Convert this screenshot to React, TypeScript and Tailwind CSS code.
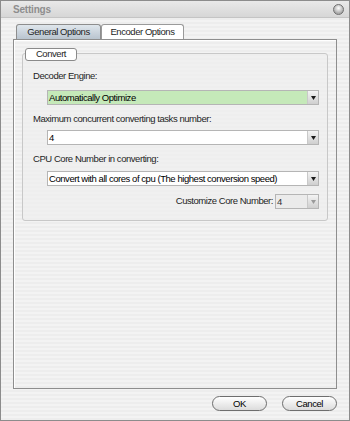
import React from "react";

const stripes =
  "bg-[repeating-linear-gradient(0deg,#ededed_0px,#ededed_2px,#f3f3f3_2px,#f3f3f3_4px)]";

function Arrow({ disabled }: { disabled?: boolean }) {
  return (
    <div className="flex h-full w-[11px] items-center justify-center border-l border-[#c9c9c9] bg-gradient-to-b from-[#f4f4f4] to-[#cfcfcf]">
      <svg width="5" height="4" viewBox="0 0 5 4">
        <path d="M0 0h5L2.5 4z" fill={disabled ? "#9a9a9a" : "#1a1a1a"} />
      </svg>
    </div>
  );
}

function Select({
  value,
  className,
  disabled,
}: {
  value: string;
  className: string;
  disabled?: boolean;
}) {
  return (
    <div
      className={`flex h-[15px] items-stretch border border-[#b5b5b5] ${className}`}
    >
      <div
        className={`flex-1 overflow-hidden whitespace-nowrap pl-[1px] leading-[13px] ${
          disabled ? "text-[#333]" : "text-black"
        }`}
      >
        {value}
      </div>
      <Arrow disabled={disabled} />
    </div>
  );
}

export default function App() {
  return (
    <div
      className={`flex h-[421px] w-[350px] flex-col overflow-hidden border border-[#8c8c8c] ${stripes} font-['Liberation_Sans',Arial,sans-serif] text-[9.5px] tracking-[-0.45px] text-[#1e1e1e]`}
    >
      {/* title bar */}
      <div className="flex h-[17px] items-center justify-between border-b border-[#c4c4c4] bg-gradient-to-b from-[#e9e9e9] to-[#d6d6d6] pl-[12px] pr-[5px]">
        <span className="text-[10px] font-bold tracking-[-0.2px] text-[#8e8e8e]">Settings</span>
        <div className="h-[11px] w-[11px] rounded-full border border-[#6f6f6f] bg-[radial-gradient(circle_at_50%_35%,#ffffff,#a8a8a8_70%)]" />
      </div>

      <div className="flex flex-1 flex-col px-[12px] pt-[6px]">
        {/* tabs */}
        <div className="flex pl-[3px]">
          <div className="flex h-[15px] w-[85px] items-center justify-center rounded-t-[3px] border border-b-0 border-[#8d8d8d] bg-gradient-to-b from-[#dfe6ec] to-[#b9c4cf]">
            General Options
          </div>
          <div className="flex h-[15px] w-[83px] items-center justify-center rounded-t-[3px] border border-b-0 border-[#9a9a9a] bg-white">
            Encoder Options
          </div>
        </div>

        {/* panel */}
        <div className="h-[350px] border border-[#8e8e8e] px-[8px] pt-[7px] shadow-[inset_1px_1px_0_#ffffff]">
          <div className="relative mt-[6px] h-[168px] rounded-[3px] border border-[#c8c8c8] bg-[#eeeeee]/60">
            <div className="absolute left-[2px] top-[-6px] flex h-[13px] w-[52px] items-center justify-center rounded-[3px] border border-[#8a8a8a] bg-white">
              Convert
            </div>
            <div className="flex flex-col pl-[10px] pr-[8px] pt-[15px]">
              <div className="h-[14px] leading-[14px]">Decoder Engine:</div>
              <div className="pl-[14px] pt-[7px]">
                <Select value="Automatically Optimize" className="bg-[#c5e9b9]" />
              </div>
              <div className="mt-[7px] h-[14px] leading-[14px]">
                Maximum concurrent converting tasks number:
              </div>
              <div className="pl-[14px] pt-[4px]">
                <Select value="4" className="bg-white" />
              </div>
              <div className="mt-[7px] h-[14px] leading-[14px]">
                CPU Core Number in converting:
              </div>
              <div className="pl-[14px] pt-[5px]">
                <Select
                  value="Convert with all cores of cpu (The highest conversion speed)"
                  className="bg-white"
                />
              </div>
              <div className="mt-[8px] flex items-center justify-end gap-[2px]">
                <span>Customize Core Number:</span>
                <Select value="4" className="w-[44px] bg-[#ebebeb]" disabled />
              </div>
            </div>
          </div>
        </div>

        {/* buttons */}
        <div className="flex justify-end gap-[15px] pt-[7px]">
          <button className="h-[15px] w-[55px] rounded-full border border-[#6e6e6e] bg-gradient-to-b from-[#ffffff] to-[#dcdcdc] leading-[13px] text-black">
            OK
          </button>
          <button className="h-[15px] w-[55px] rounded-full border border-[#6e6e6e] bg-gradient-to-b from-[#ffffff] to-[#dcdcdc] leading-[13px] text-black">
            Cancel
          </button>
        </div>
      </div>
    </div>
  );
}
